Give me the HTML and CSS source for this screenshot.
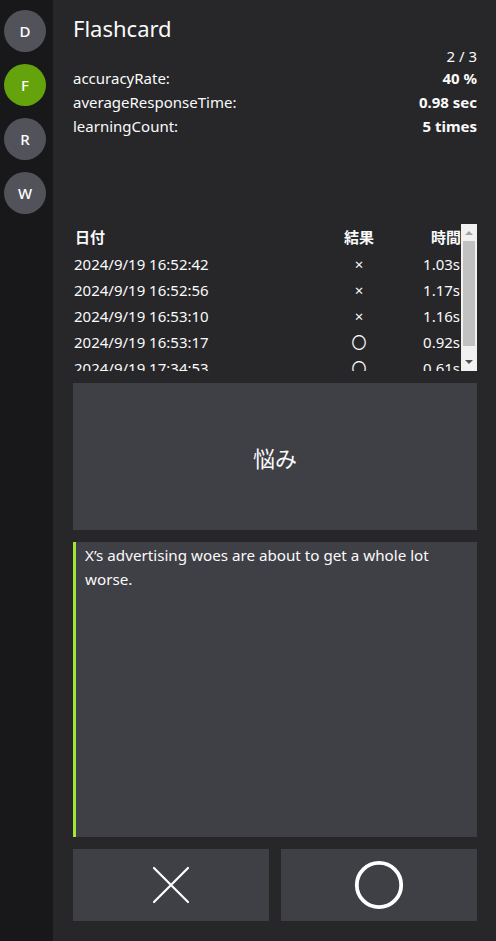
FILE: index.html
```html
<!DOCTYPE html>
<html lang="ja">
<head>
<meta charset="utf-8">
<title>Flashcard</title>
<link rel="stylesheet" href="styles.css">
</head>
<body>
<div class="app">
  <nav class="sidebar">
    <div class="avatar">D</div>
    <div class="avatar active">F</div>
    <div class="avatar">R</div>
    <div class="avatar">W</div>
  </nav>
  <main class="main">
    <h1 class="title">Flashcard</h1>
    <div class="progress">2 / 3</div>
    <div class="stats">
      <div class="stat"><span>accuracyRate:</span><b>40 %</b></div>
      <div class="stat"><span>averageResponseTime:</span><b>0.98 sec</b></div>
      <div class="stat"><span>learningCount:</span><b>5 times</b></div>
    </div>
    <div class="history">
      <div class="history-scroll">
        <table class="log">
          <thead>
            <tr><th class="c-date">日付</th><th class="c-res">結果</th><th class="c-time">時間</th></tr>
          </thead>
          <tbody>
            <tr><td class="c-date">2024/9/19 16:52:42</td><td class="c-res">×</td><td class="c-time">1.03s</td></tr>
            <tr><td class="c-date">2024/9/19 16:52:56</td><td class="c-res">×</td><td class="c-time">1.17s</td></tr>
            <tr><td class="c-date">2024/9/19 16:53:10</td><td class="c-res">×</td><td class="c-time">1.16s</td></tr>
            <tr><td class="c-date">2024/9/19 16:53:17</td><td class="c-res">〇</td><td class="c-time">0.92s</td></tr>
            <tr><td class="c-date">2024/9/19 17:34:53</td><td class="c-res">〇</td><td class="c-time">0.61s</td></tr>
          </tbody>
        </table>
      </div>
      <div class="scrollbar" aria-hidden="true">
        <span class="sb-btn"><span class="tri up"></span></span>
        <span class="sb-thumb"></span>
        <span class="sb-btn bottom"><span class="tri down"></span></span>
      </div>
    </div>
    <div class="card word">悩み</div>
    <div class="card sentence"><p>X’s advertising woes are about to get a whole lot worse.</p></div>
    <div class="actions">
      <button class="btn" aria-label="wrong">
        <svg width="38" height="38" viewBox="0 0 38 38"><path d="M2 2 L36 36 M36 2 L2 36" stroke="#fff" stroke-width="2.2" stroke-linecap="round"/></svg>
      </button>
      <button class="btn" aria-label="correct">
        <svg width="50" height="50" viewBox="0 0 50 50"><circle cx="25" cy="25" r="22.2" fill="none" stroke="#fff" stroke-width="3.8"/></svg>
      </button>
    </div>
  </main>
</div>
</body>
</html>
```
FILE: styles.css
```css
* { box-sizing: border-box; }
html, body { margin: 0; height: 100%; }
body {
  font-family: "Noto Sans", "Noto Sans CJK JP", sans-serif;
  color: #fafafa;
  background: #27272a;
}
.app { display: flex; height: 100vh; }
.sidebar {
  width: 53px;
  flex: none;
  background: #18181b;
  display: flex;
  flex-direction: column;
  align-items: flex-start;
  gap: 12px;
  padding: 10px 0 0 4px;
}
.avatar {
  width: 42px; height: 42px;
  border-radius: 50%;
  background: #52525b;
  display: flex; align-items: center; justify-content: center;
  font-size: 15px;
  font-weight: 500;
  color: #fff;
}
.avatar.active { background: #65a30d; }
.main {
  flex: 1;
  display: flex;
  flex-direction: column;
  padding: 12px 19px 20px 20px;
  min-width: 0;
}
.title {
  margin: 0;
  font-size: 22px;
  font-weight: 400;
  line-height: 32px;
}
.progress {
  text-align: right;
  font-size: 15px;
  line-height: 20px;
  margin-top: 2px;
}
.stats { font-size: 15px; }
.stat {
  display: flex;
  justify-content: space-between;
  line-height: 24px;
}
.stat b { font-weight: 700; }
.history {
  margin-top: 86px;
  height: 147px;
  flex: none;
  display: flex;
}
.history-scroll {
  flex: 1;
  overflow: hidden;
  min-width: 0;
}
.log {
  width: 100%;
  border-collapse: collapse;
  font-size: 15px;
}
.log th { font-weight: 700; line-height: 27px; padding: 0; }
.log td { line-height: 26px; padding: 0; }
.c-date { text-align: left; }
.log th.c-date { padding-left: 2px; }
.log td.c-date { padding-left: 1px; }
.c-res { text-align: center; width: 92px; }
.c-time { text-align: right; width: 56px; }
.log td.c-time { padding-right: 1px; }
.scrollbar {
  width: 16px;
  flex: none;
  background: #f1f1f1;
  display: flex;
  flex-direction: column;
  align-items: center;
}
.sb-btn {
  height: 17px;
  width: 16px;
  display: flex; align-items: center; justify-content: center;
}
.sb-btn.bottom { margin-top: auto; height: 18px; }
.sb-thumb {
  width: 12px;
  height: 105px;
  background: #c1c1c1;
  margin-left: 2px;
  align-self: flex-start;
}
.tri { width: 0; height: 0; border-left: 4px solid transparent; border-right: 4px solid transparent; }
.tri.up { border-bottom: 4px solid #a3a3a3; }
.tri.down { border-top: 4px solid #505050; }
.card { background: #3f3f46; }
.word {
  margin-top: 12px;
  height: 147px;
  flex: none;
  display: flex; align-items: center; justify-content: center;
  font-size: 22px;
}
.sentence {
  margin-top: 12px;
  flex: 1;
  border-left: 3px solid #a3e635;
  padding: 1px 12px 0 9px;
}
.sentence p {
  margin: 0;
  font-size: 15.2px;
  line-height: 24px;
}
.actions {
  margin-top: 12px;
  display: flex;
  gap: 12px;
  flex: none;
}
.btn {
  flex: 1;
  height: 72px;
  border: 0;
  background: #3f3f46;
  display: flex; align-items: center; justify-content: center;
  padding: 0;
}
```
